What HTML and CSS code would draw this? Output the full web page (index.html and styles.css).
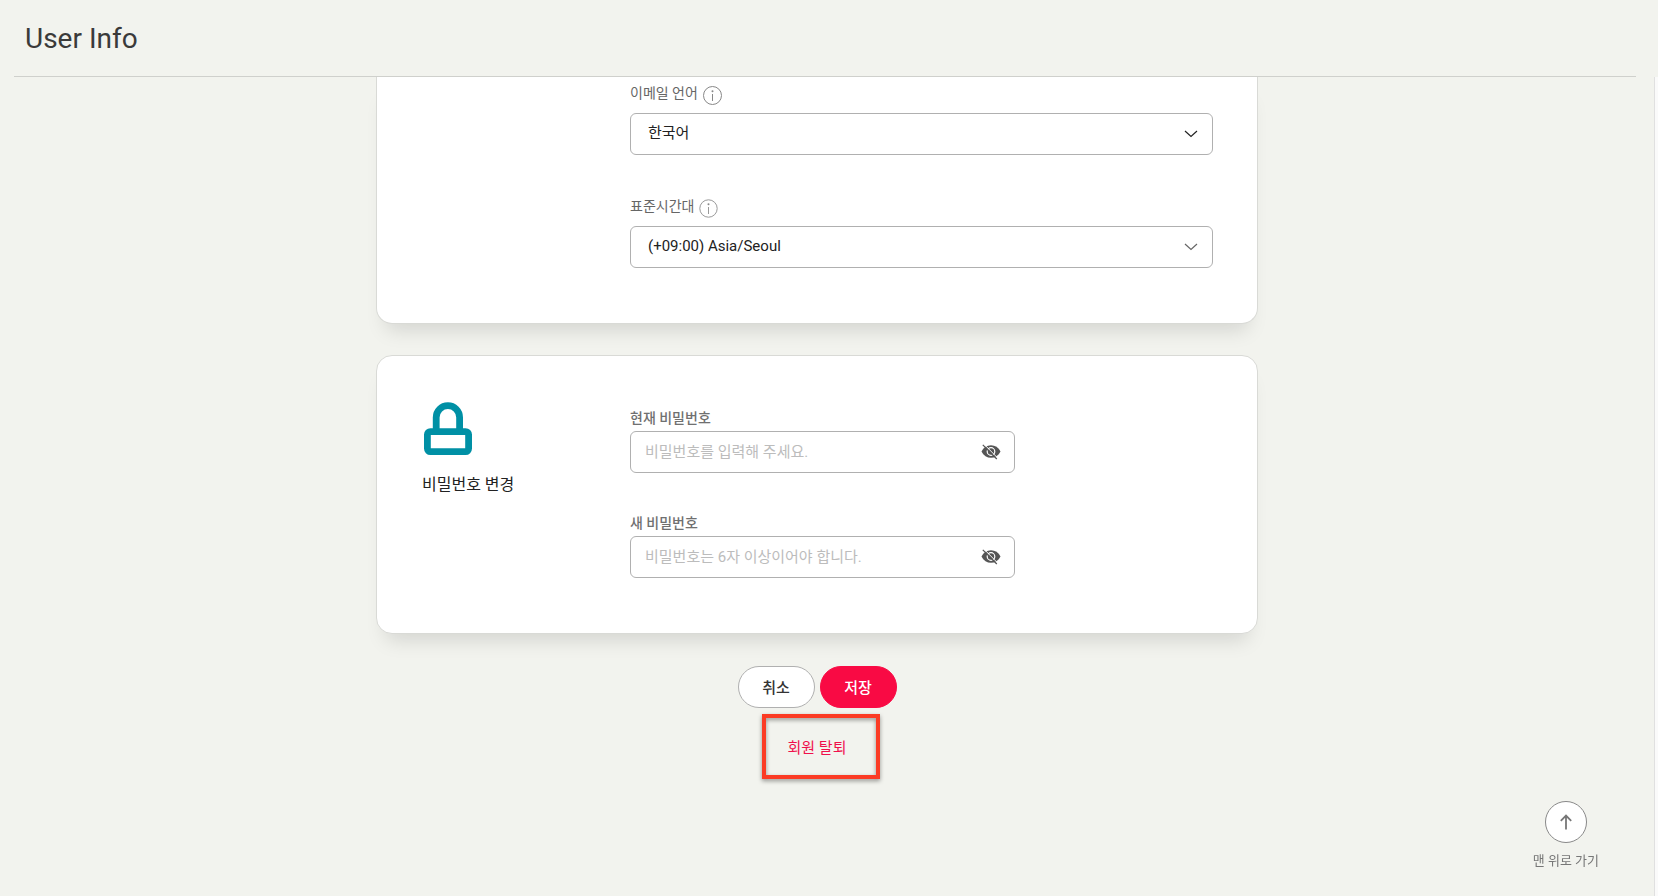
FILE: index.html
```html
<!DOCTYPE html>
<html lang="ko">
<head>
<meta charset="utf-8">
<meta name="viewport" content="width=device-width, initial-scale=1">
<title>User Info</title>
<link rel="stylesheet" href="styles.css">
</head>
<body>
<div class="page">
  <header class="header"><h1 class="header-title">User Info</h1></header>
  <div class="body">
    <main class="content">
      <section class="card card-continued">
        <div class="fields">
          <div class="field">
            <div class="label-row">
              <label class="label" for="lang">이메일 언어</label>
              <svg class="info" viewBox="0 0 19 19" aria-hidden="true"><circle cx="9.5" cy="9.5" r="9"/><path d="M9.5 8v7"/><circle class="dot" cx="9.5" cy="5.2" r="1"/></svg>
            </div>
            <div class="select-wrap">
              <select class="control select" id="lang"><option>한국어</option></select>
              <svg class="chevron chevron-dark" viewBox="0 0 14 8" aria-hidden="true"><path d="M1 1l6 5.5L13 1"/></svg>
            </div>
          </div>
          <div class="field">
            <div class="label-row">
              <label class="label" for="zone">표준시간대</label>
              <svg class="info info-light" viewBox="0 0 19 19" aria-hidden="true"><circle cx="9.5" cy="9.5" r="8.7"/><path d="M9.5 8v7"/><circle class="dot" cx="9.5" cy="5.2" r="1"/></svg>
            </div>
            <div class="select-wrap">
              <select class="control select" id="zone"><option>(+09:00) Asia/Seoul</option></select>
              <svg class="chevron" viewBox="0 0 14 8" aria-hidden="true"><path d="M1 1l6 5.5L13 1"/></svg>
            </div>
          </div>
        </div>
      </section>

      <section class="card">
        <div class="side">
          <svg class="lock" viewBox="0 0 48 53" aria-hidden="true"><path d="M12.2 28V15.400a11.700 11.700 0 0 1 23.400 0V28"/><rect x="3.400" y="29.600" width="41.200" height="20" rx="3"/></svg>
          <h2 class="side-title">비밀번호 변경</h2>
        </div>
        <div class="fields fields-password">
          <div class="field">
            <label class="label label-strong" for="current">현재 비밀번호</label>
            <div class="input-wrap">
              <input class="control input" id="current" type="password" placeholder="비밀번호를 입력해 주세요.">
              <button class="eye" type="button" aria-label="비밀번호 표시"><svg viewBox="0 0 20 16" aria-hidden="true"><path class="lid" d="M0.500 7.500C2.500 3.300 6 1.200 10 1.200s7.500 2.100 9.500 6.300c-2 4.200-5.500 6.300-9.500 6.300S2.500 11.700.500 7.500z"/><circle class="ring" cx="10" cy="7.500" r="3.800"/><circle class="pupil" cx="10" cy="7.500" r="2"/><path class="gap" d="M3 .2l14 14.200"/><path class="slash" d="M1.800 .800L15.800 15"/></svg></button>
            </div>
          </div>
          <div class="field">
            <label class="label label-strong" for="next">새 비밀번호</label>
            <div class="input-wrap">
              <input class="control input" id="next" type="password" placeholder="비밀번호는 6자 이상이어야 합니다.">
              <button class="eye" type="button" aria-label="비밀번호 표시"><svg viewBox="0 0 20 16" aria-hidden="true"><path class="lid" d="M0.500 7.500C2.500 3.300 6 1.200 10 1.200s7.500 2.100 9.500 6.300c-2 4.200-5.500 6.300-9.500 6.300S2.500 11.700.500 7.500z"/><circle class="ring" cx="10" cy="7.500" r="3.800"/><circle class="pupil" cx="10" cy="7.500" r="2"/><path class="gap" d="M3 .2l14 14.200"/><path class="slash" d="M1.800 .800L15.800 15"/></svg></button>
            </div>
          </div>
        </div>
      </section>

      <div class="actions">
        <button class="button" type="button">취소</button>
        <button class="button button-primary" type="button">저장</button>
      </div>
      <div class="leave">
        <a class="leave-link" href="#">회원 탈퇴</a>
        <span class="highlight"></span>
      </div>
    </main>
    <div class="track"></div>
  </div>
  <a class="to-top" href="#"><span class="to-top-circle"><svg viewBox="0 0 14 16" aria-hidden="true"><path d="M7 15.500V2M1.800 6.800L7 1.600l5.200 5.200"/></svg></span>맨 위로 가기</a>
</div>
</body>
</html>
```
FILE: styles.css
```css
* { box-sizing: border-box; }
body {
  margin: 0;
  background: #f2f3ee;
  color: #222;
  font-family: Roboto, "Noto Sans CJK KR", sans-serif;
  font-size: 15px;
}
.page { display: flex; flex-direction: column; min-height: 100vh; }
.header {
  margin: 0 22px 0 14px;
  padding: 19px 11px 17px;
  border-bottom: 1px solid #cfd0cc;
}
.header-title { margin: 0; font-size: 28px; line-height: 40px; font-weight: 400; color: #3a3a3a; }
.body { flex: 1; display: flex; }
.content {
  flex: 1;
  display: flex;
  flex-direction: column;
  align-items: center;
  padding: 0 20px 40px 0;
}
.track { width: 4px; background: #fafafa; border-left: 1px solid #e0e0e0; }
.card {
  display: flex;
  width: 100%;
  max-width: 882px;
  margin-top: 31px;
  padding: 46px 44px 55px 45px;
  background: #fff;
  border: 1px solid #d9dad6;
  border-radius: 16px;
  box-shadow: 0 16px 20px -10px rgba(0, 0, 0, 0.13);
}
.card-continued {
  justify-content: flex-end;
  margin-top: 0;
  padding-top: 8px;
  border-top: 0;
  border-radius: 0 0 16px 16px;
}
.side { width: 208px; flex-shrink: 0; }
.side-title { margin: 18px 0 0; font-size: 16px; line-height: 24px; font-weight: 400; }
.lock { display: block; width: 48px; height: 53px; margin-left: 2px; fill: none; stroke: #0090a5; stroke-width: 6.800; }
.fields { width: 583px; display: flex; flex-direction: column; gap: 43px; }
.fields-password { max-width: 385px; padding-top: 6px; gap: 40px; }
.label-row { display: flex; gap: 5px; height: 28px; }
.label { display: block; font-size: 14px; line-height: 16px; color: #666; }
.label-strong { margin-bottom: 3px; line-height: 20px; font-weight: 500; color: #707070; }
.info { width: 19px; height: 19px; margin-top: 1px; fill: none; stroke: #888; stroke-width: 1; }
.info .dot { fill: #888; stroke: none; }
.info-light { stroke: #999; }
.select-wrap, .input-wrap { position: relative; }
.control {
  display: block;
  width: 100%;
  height: 42px;
  margin: 0;
  border: 1px solid #b0b0b0;
  border-radius: 6px;
  background: #fff;
  color: #222;
  font: inherit;
}
.select { appearance: none; padding: 0 48px 3px 17px; }
.input { padding: 0 48px 0 14px; }
.input::placeholder { color: #bcbcbc; opacity: 1; }
.chevron {
  position: absolute;
  right: 15px;
  top: 17px;
  width: 14px;
  height: 8px;
  fill: none;
  stroke: #666;
  stroke-width: 1.200;
  pointer-events: none;
}
.chevron-dark { stroke: #222; }
.eye { position: absolute; right: 14px; top: 13px; padding: 0; border: 0; background: none; line-height: 0; }
.eye svg { width: 20px; height: 16px; }
.lid, .pupil { fill: #555; }
.ring { fill: #555; stroke: #fff; stroke-width: 1.200; }
.gap { stroke: #fff; stroke-width: 1; }
.slash { stroke: #555; stroke-width: 1.200; }
.actions { display: flex; gap: 5px; margin-top: 32px; }
.button {
  min-width: 77px;
  height: 42px;
  padding: 0 20px 2px;
  border: 1px solid #b0b0b0;
  border-radius: 21px;
  background: #fff;
  color: #333;
  font: inherit;
  font-weight: 500;
}
.button-primary { border-color: #f90a44; background: #f90a44; color: #fff; }
.leave { position: relative; margin-top: 28px; }
.leave-link { display: block; line-height: 24px; color: #f0104c; text-decoration: none; }
.highlight {
  position: absolute;
  inset: -22px -34px -19px -26px;
  border: 4px solid #fb3b24;
  filter: drop-shadow(0 2px 2px rgba(0, 0, 0, 0.4));
  pointer-events: none;
}
.to-top {
  position: fixed;
  right: 59px;
  bottom: 25px;
  display: flex;
  flex-direction: column;
  align-items: center;
  gap: 8px;
  font-size: 13px;
  line-height: 20px;
  color: #777;
  text-decoration: none;
}
.to-top-circle {
  display: flex;
  align-items: center;
  justify-content: center;
  width: 42px;
  height: 42px;
  border: 1px solid #888;
  border-radius: 50%;
  background: #fff;
}
.to-top svg { width: 14px; height: 16px; fill: none; stroke: #777; stroke-width: 1.800; }
```
